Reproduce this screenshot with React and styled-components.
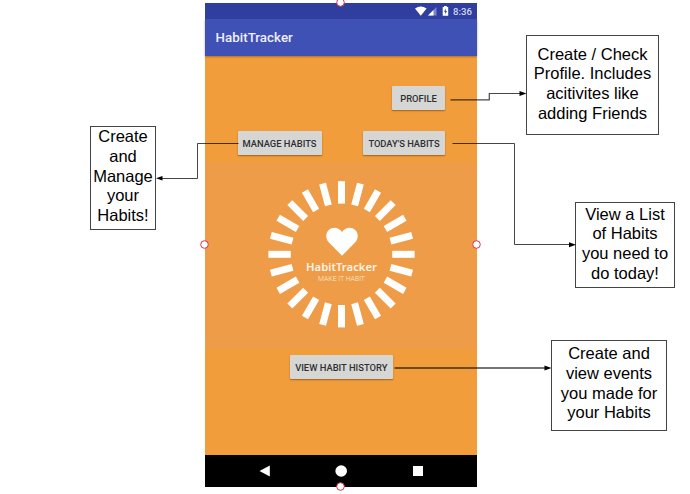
import React from "react";
import styled, { createGlobalStyle } from "styled-components";

const GlobalStyle = createGlobalStyle`
  * { box-sizing: border-box; }
  body { margin: 0; background: #fff; overflow: hidden; }
`;

const Canvas = styled.main`
  position: relative;
  width: 690px;
  height: 494px;
  background: #fff;
  overflow: hidden;
`;

const Phone = styled.section`
  position: absolute;
  left: 205px;
  top: 3px;
  width: 272px;
  height: 484px;
  display: flex;
  flex-direction: column;
  font-family: Roboto, sans-serif;
`;

const StatusBar = styled.header`
  height: 16px;
  flex: none;
  display: flex;
  align-items: center;
  justify-content: flex-end;
  padding-right: 5px;
  background: #303f9f;
  color: #d5d9ef;
`;

const StatusIcons = styled.svg`
  width: 38px;
  height: 16px;
`;

const Clock = styled.span`
  width: 19px;
  font-size: 9.6px;
  line-height: 17px;
  font-weight: 500;
  white-space: nowrap;
`;

const AppBar = styled.div`
  height: 37px;
  flex: none;
  display: flex;
  align-items: center;
  padding: 0 0 0 10.5px;
  background: #3f51b5;
  box-shadow: 0 1px 2px rgba(90, 50, 0, 0.45);
  z-index: 1;
`;

const AppTitle = styled.h1`
  margin: 0;
  color: #eef0fa;
  font-size: 13.3px;
  font-weight: 500;
  letter-spacing: 0.05px;
`;

const Screen = styled.div`
  flex: 1;
  display: flex;
  flex-direction: column;
  background: #f19d3b;
`;

const ButtonRow = styled.div`
  display: flex;
  justify-content: ${(p) => p.$justify || "space-between"};
  padding: ${(p) => p.$pad};
`;

const Button = styled.button`
  width: ${(p) => p.$width}px;
  height: 24px;
  padding: 1px 0 0;
  border: 0;
  border-radius: 1px;
  background: #d6d7d5;
  color: #303030;
  box-shadow: 0 1px 1.5px rgba(80, 45, 0, 0.5);
  font: 500 9.4px/22px Roboto, sans-serif;
  letter-spacing: ${(p) => p.$spacing || 0}px;
  white-space: nowrap;
`;

const LogoPanel = styled.div`
  height: 187px;
  background: #ee9c48;
  display: grid;
  justify-items: center;
  align-content: start;
  padding: 65px 0 0 1px;
  color: #fff;
  position: relative;
`;

const Burst = styled.svg`
  position: absolute;
  left: 0;
  top: 0;
  width: 272px;
  height: 187px;
`;

const Heart = styled.svg`
  width: 32px;
  height: 29px;
`;

const Brand = styled.div`
  margin-top: 4px;
  font: 600 11.2px/13px "Noto Sans", sans-serif;
  letter-spacing: 0.05px;
  color: #fff4e6;
`;

const Tagline = styled.div`
  margin-top: 2px;
  font: 300 6.9px/9px Roboto, sans-serif;
  color: #ffeedb;
`;

const NavBar = styled.footer`
  height: 32px;
  flex: none;
  display: flex;
  background: #000;
`;

const NavIcons = styled.svg`
  width: 272px;
  height: 32px;
`;

const Note = styled.div`
  position: absolute;
  left: ${(p) => p.$x}px;
  top: ${(p) => p.$y}px;
  width: ${(p) => p.$w}px;
  height: ${(p) => p.$h}px;
  padding-top: ${(p) => p.$top}px;
  border: 1px solid #444;
  background: #fff;
  color: #000;
  display: flex;
  flex-direction: column;
  align-items: center;
  font: 16.5px/19.75px "Liberation Sans", Arial, sans-serif;
`;

const NoteLine = styled.span`
  white-space: nowrap;
`;

const Connectors = styled.svg`
  position: absolute;
  left: 0;
  top: 0;
  pointer-events: none;
`;

const notes = [
  { x: 90, y: 126, w: 66, h: 104, top: 0, lines: ["Create", "and", "Manage", "your", "Habits!"] },
  { x: 526, y: 35, w: 133, h: 100, top: 8.5, lines: ["Create / Check", "Profile. Includes", "acitivites like", "adding Friends"] },
  { x: 575, y: 202, w: 100, h: 86, top: 1.5, lines: ["View a List", "of Habits", "you need to", "do today!"] },
  { x: 551, y: 340, w: 116, h: 91, top: 3, lines: ["Create and", "view events", "you made for", "your Habits"] },
];

const handles = [[340.5, 2.5], [204.5, 244.5], [476.5, 244.5], [340.5, 486.5]];
const rays = Array.from({ length: 24 }, (_, i) => i * 15);

export default function App() {
  return (
    <Canvas>
      <GlobalStyle />
      <Phone>
        <StatusBar>
          <StatusIcons viewBox="0 0 38 16">
            <path d="M0 5.6Q5.8 1.2 11.6 5.6L5.8 12.8Z" fill="#fff" />
            <path d="M13 12.5L21.5 4V12.5Z" fill="#7c87c8" />
            <path d="M13 12.5L18.5 7V12.5Z" fill="#fff" />
            <path d="M27.7 4H29V3h2.8v1H33.2v8.8h-5.5Z" fill="#fff" />
            <path d="M30.8 5.5L29 8.7h1.2v2.6L32 8h-1.2Z" fill="#303f9f" />
          </StatusIcons>
          <Clock>8:36</Clock>
        </StatusBar>
        <AppBar><AppTitle>HabitTracker</AppTitle></AppBar>
        <Screen>
          <ButtonRow $justify="flex-end" $pad="30px 32px 0 0">
            <Button $width={53}>PROFILE</Button>
          </ButtonRow>
          <ButtonRow $pad="21px 32px 7px 32.5px">
            <Button $width={84}>MANAGE HABITS</Button>
            <Button $width={82} $spacing={-0.04}>TODAY'S HABITS</Button>
          </ButtonRow>
          <LogoPanel>
            <Burst viewBox="0 0 272 187">
              {rays.map((a) => (
                <rect key={a} x="133" y="19.2" width="7" height="22.4" fill="#fff" transform={`rotate(${a} 136.5 92.3)`} />
              ))}
            </Burst>
            <Heart viewBox="0 0 32 29">
              <path d="M16 28.8L2.7 15.2C-.8 11.5-.4 5.8 3 2.8C6.9-.8 13.2.4 16 5.1C18.8.4 25.1-.8 29 2.8C32.4 5.8 32.8 11.5 29.3 15.2Z" fill="#fff" />
            </Heart>
            <Brand>HabitTracker</Brand>
            <Tagline>MAKE IT HABIT</Tagline>
          </LogoPanel>
          <ButtonRow $justify="flex-start" $pad="6px 0 0 85px">
            <Button $width={102.5}>VIEW HABIT HISTORY</Button>
          </ButtonRow>
        </Screen>
        <NavBar>
          <NavIcons viewBox="0 0 272 32">
            <path d="M54.5 16L64.8 10.4V21.6Z" fill="#fff" />
            <circle cx="136.2" cy="16" r="5.8" fill="#fff" />
            <rect x="208" y="11" width="10" height="10" fill="#fff" />
          </NavIcons>
        </NavBar>
      </Phone>

      {notes.map((n) => (
        <Note key={n.x} $x={n.x} $y={n.y} $w={n.w} $h={n.h} $top={n.top}>
          {n.lines.map((l) => <NoteLine key={l}>{l}</NoteLine>)}
        </Note>
      ))}

      <Connectors width="690" height="494" viewBox="0 0 690 494">
        <g fill="none" stroke="#000" strokeOpacity=".72">
          <path d="M238.5 143.5H197.5V178.5H162" />
          <path d="M450.5 99.8H489.3V93.5H521" strokeWidth="1.2" />
          <path d="M452.5 143.5H514.5V244.5H571" />
          <path d="M394.5 368H546" strokeWidth="1.5" />
        </g>
        <path d="M156 178.3l6.5-2.3v4.6ZM526.5 93.5l-7-2.5v5ZM576 244.7l-7-2.5v5ZM551.5 368l-7-2.5v5Z" fill="#000" />
        <g fill="#fff" stroke="#e0304a">
          {handles.map(([x, y]) => <circle key={`${x}-${y}`} cx={x} cy={y} r="3.8" />)}
        </g>
      </Connectors>
    </Canvas>
  );
}
